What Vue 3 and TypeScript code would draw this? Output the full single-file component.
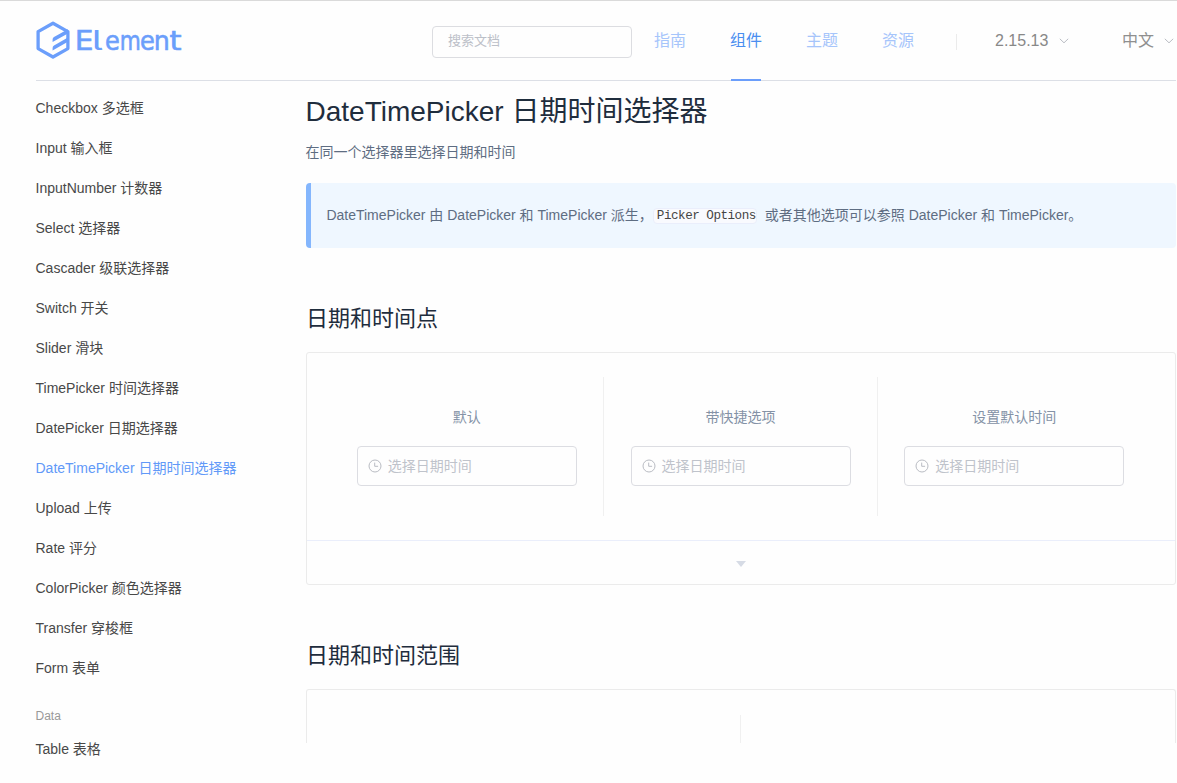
<script setup lang="ts">
interface NavItem {
  label: string
  active?: boolean
}

interface Glyph {
  char: string
  x: number
  scale: number
  tailed?: boolean
}

const wordmark: Glyph[] = [
  { char: 'E', x: 38.7, scale: 1.11 },
  { char: 'l', x: 55.8, scale: 1.5, tailed: true },
  { char: 'e', x: 69, scale: 0.9 },
  { char: 'm', x: 83.7, scale: 0.81 },
  { char: 'e', x: 103.9, scale: 0.9 },
  { char: 'n', x: 117.7, scale: 0.95 },
  { char: 't', x: 133.5, scale: 1.15 },
]

const nav: NavItem[] = [
  { label: '指南' },
  { label: '组件', active: true },
  { label: '主题' },
  { label: '资源' },
]

const formItems: string[] = [
  'Checkbox 多选框',
  'Input 输入框',
  'InputNumber 计数器',
  'Select 选择器',
  'Cascader 级联选择器',
  'Switch 开关',
  'Slider 滑块',
  'TimePicker 时间选择器',
  'DatePicker 日期选择器',
  'DateTimePicker 日期时间选择器',
  'Upload 上传',
  'Rate 评分',
  'ColorPicker 颜色选择器',
  'Transfer 穿梭框',
  'Form 表单',
]
const activeItem = 'DateTimePicker 日期时间选择器'

const pickers: string[] = ['默认', '带快捷选项', '设置默认时间']
</script>

<template>
  <div class="page">
    <header class="header">
      <svg class="logo" width="150" height="43" viewBox="0 0 150 43">
        <path
          d="M17 4.2 31.9 12.6v17L17 38 2.1 29.6v-17Z"
          fill="none"
          stroke="#6b9efb"
          stroke-width="3.3"
          stroke-linejoin="round"
        />
        <path
          d="M31.9 10.2v4.2L16.6 23v-2.4q0-1.7 1.4-2.5ZM31.9 18.6v4.2L16.6 31.4V29q0-1.7 1.4-2.5Z"
          fill="#6b9efb"
        />
        <text
          v-for="(g, i) in wordmark"
          :key="i"
          class="wordmark"
          :class="{ tailed: g.tailed }"
          :transform="`translate(${g.x} 31) scale(${g.scale} 1)`"
        >{{ g.char }}</text>
      </svg>
      <div class="search">搜索文档</div>
      <nav class="nav">
        <a v-for="n in nav" :key="n.label" class="nav-link" :class="{ active: n.active }">{{ n.label }}</a>
      </nav>
      <span class="split"></span>
      <div class="drop version">
        2.15.13
        <svg width="10" height="6" viewBox="0 0 10 6"><path d="M.8.8 5 4.8 9.2.8" /></svg>
      </div>
      <div class="drop lang">
        中文
        <svg width="10" height="6" viewBox="0 0 10 6"><path d="M.8.8 5 4.8 9.2.8" /></svg>
      </div>
    </header>

    <div class="body">
      <aside class="side">
        <a v-for="item in formItems" :key="item" class="side-link" :class="{ active: item === activeItem }">{{ item }}</a>
        <div class="group">Data</div>
        <a class="side-link">Table 表格</a>
      </aside>

      <main class="main">
        <h1>DateTimePicker 日期时间选择器</h1>
        <p class="intro">在同一个选择器里选择日期和时间</p>
        <div class="tip">
          <span>DateTimePicker 由 DatePicker 和 TimePicker 派生，</span><code>Picker Options</code><span>或者其他选项可以参照 DatePicker 和 TimePicker。</span>
        </div>

        <h2>日期和时间点</h2>
        <section class="demo">
          <div class="source">
            <div v-for="p in pickers" :key="p" class="block">
              <span class="caption">{{ p }}</span>
              <div class="input">
                <svg width="14" height="14" viewBox="0 0 14 14">
                  <circle cx="7" cy="7" r="6" />
                  <path d="M6.7 3.6v3.7h3.4" />
                </svg>
                <span>选择日期时间</span>
              </div>
            </div>
          </div>
          <div class="control"><span class="caret"></span></div>
        </section>

        <h2 class="second">日期和时间范围</h2>
        <section class="demo cut">
          <div class="half"></div>
          <div class="half"></div>
        </section>
      </main>
    </div>
  </div>
</template>

<style>
body {
  margin: 0;
  background: #fefefe;
}
</style>

<style scoped>
.page {
  box-sizing: border-box;
  width: 1177px;
  height: 783px;
  overflow: hidden;
  border-top: 1px solid #dadada;
  background: #fefefe;
  font-family: 'Liberation Sans', Arial, 'Noto Sans CJK SC', sans-serif;
  font-size: 14px;
}
.header {
  box-sizing: border-box;
  display: flex;
  align-items: center;
  height: 80px;
  margin: 0 1px 0 36px;
  border-bottom: 1px solid #dcdfe6;
}
.logo {
  flex: none;
  margin-right: 246px;
}
.wordmark {
  font-family: 'DejaVu Sans', sans-serif;
  font-size: 26.7px;
  fill: #6b9efb;
  stroke: #6b9efb;
  stroke-width: 0.6;
}
.wordmark.tailed {
  font-family: Inter, sans-serif;
  font-feature-settings: 'cv05', 'ss02';
  stroke-width: 0;
}
.search {
  box-sizing: border-box;
  flex: none;
  width: 200px;
  height: 32px;
  margin-top: 2px;
  padding-left: 15px;
  border: 1px solid #dcdde1;
  border-radius: 4px;
  color: #bcc0c8;
  font-size: 13px;
  line-height: 28px;
}
.nav {
  display: flex;
  flex: none;
  gap: 44px;
  height: 80px;
  margin-left: 22px;
}
.nav-link {
  box-sizing: border-box;
  position: relative;
  width: 32px;
  height: 80px;
  color: #a6c5fb;
  font-size: 16px;
  line-height: 80px;
  white-space: nowrap;
}
.nav-link.active {
  color: #4a8ef0;
}
.nav-link.active::after {
  content: '';
  position: absolute;
  bottom: 0;
  left: 1px;
  width: 30px;
  height: 2px;
  background: #6b9efb;
}
.split {
  flex: none;
  width: 1px;
  height: 16px;
  margin: 2px 38px 0 42px;
  background: #ebebeb;
}
.drop {
  display: flex;
  flex: none;
  align-items: center;
  gap: 10.4px;
  color: #888;
  font-size: 16px;
  line-height: 79px;
}
.drop svg,
.input svg {
  fill: none;
  stroke: #b9bcc3;
}
.version {
  width: 127px;
}
.lang {
  color: #8f8f8f;
}
.body {
  display: flex;
  padding-left: 35.5px;
}
.side {
  display: flex;
  flex: none;
  flex-direction: column;
  width: 270.5px;
  padding-top: 7px;
}
.side-link {
  height: 40px;
  color: #484848;
  line-height: 40px;
}
.side-link.active {
  color: #6199f8;
}
.group {
  height: 26px;
  margin-top: 15px;
  color: #999;
  font-size: 12px;
  line-height: 26px;
}
.main {
  width: 870px;
}
h1,
h2,
p {
  margin: 0;
  font-weight: 400;
}
h1 {
  padding-top: 11px;
  color: #1f2d3d;
  font-size: 28px;
  line-height: 40px;
  text-indent: -0.5px;
}
.intro {
  margin-top: 10px;
  color: #5e6d82;
  line-height: 20px;
  text-indent: -0.5px;
}
.tip {
  box-sizing: border-box;
  display: flex;
  align-items: center;
  height: 65px;
  margin-top: 21px;
  padding: 0 0 3px 15.4px;
  border-left: 5px solid #84b6fd;
  border-radius: 4px;
  background: #eff7ff;
  color: #5e6d82;
  white-space: nowrap;
}
code {
  box-sizing: border-box;
  width: 104px;
  height: 16px;
  margin: 3px 7.9px 0 0;
  padding-left: 3px;
  border: 1px solid #eaeefb;
  border-radius: 4px;
  background: #f9fafe;
  color: #444;
  font-family: 'Liberation Mono', monospace;
  font-size: 12.6px;
  letter-spacing: -0.49px;
  line-height: 15px;
}
h2 {
  margin-top: 55px;
  color: #1f2d3d;
  font-size: 22px;
  line-height: 32px;
}
.demo {
  box-sizing: border-box;
  height: 233px;
  margin-top: 17px;
  border: 1px solid #ebebeb;
  border-radius: 3px;
}
.source {
  display: flex;
  padding: 24px 24.3px 24px 23.5px;
}
.block {
  box-sizing: border-box;
  display: flex;
  flex: 1;
  flex-direction: column;
  align-items: center;
  height: 139px;
  padding-top: 30px;
  border-right: 1px solid #f0f0f0;
}
.block:last-child {
  border-right: 0;
}
.caption {
  margin-bottom: 19px;
  color: #8492a6;
  line-height: 20px;
}
.input {
  box-sizing: border-box;
  display: flex;
  align-items: center;
  gap: 6px;
  width: 220px;
  height: 40px;
  padding-left: 10px;
  border: 1px solid #dcdde2;
  border-radius: 4px;
  color: #bfc3cb;
}
.input span {
  padding-bottom: 2px;
}
.control {
  display: flex;
  align-items: center;
  justify-content: center;
  height: 43px;
  border-top: 1px solid #eaeefb;
}
.caret {
  margin: 2px 1px 0 0;
  border: 5px solid transparent;
  border-top: 6px solid #d6dbe5;
  border-bottom: 0;
}
.second {
  margin-top: 55px;
}
.demo.cut {
  display: flex;
  height: 54px;
  padding: 25px 25px 0 23px;
  border-bottom: 0;
  border-radius: 3px 3px 0 0;
}
.half {
  flex: 1;
}
.half:first-child {
  border-right: 1px solid #f0f0f0;
}
</style>
